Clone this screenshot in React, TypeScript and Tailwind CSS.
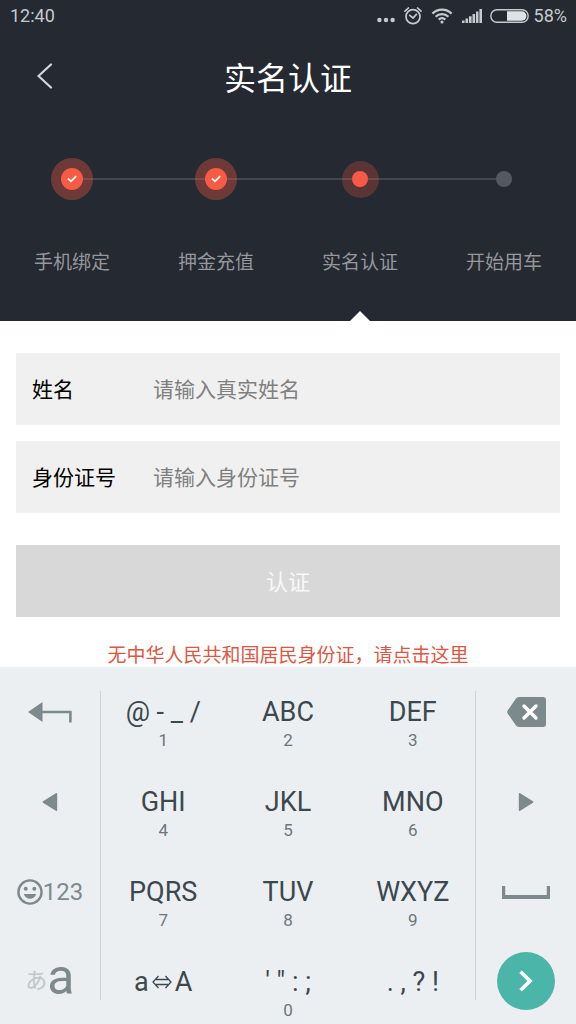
import type { ReactNode } from "react";

type StepState = "done" | "current" | "todo";

const steps: { label: string; state: StepState }[] = [
  { label: "手机绑定", state: "done" },
  { label: "押金充值", state: "done" },
  { label: "实名认证", state: "current" },
  { label: "开始用车", state: "todo" },
];

const keys: { label: string; digit?: string }[] = [
  { label: "@ - _ /", digit: "1" },
  { label: "ABC", digit: "2" },
  { label: "DEF", digit: "3" },
  { label: "GHI", digit: "4" },
  { label: "JKL", digit: "5" },
  { label: "MNO", digit: "6" },
  { label: "PQRS", digit: "7" },
  { label: "TUV", digit: "8" },
  { label: "WXYZ", digit: "9" },
  { label: "shift" },
  { label: "' \" : ;", digit: "0" },
  { label: ". , ? !" },
];

function StatusBar() {
  return (
    <div className="flex h-8 items-center justify-between pr-[9px] pl-[10px] font-['Roboto',sans-serif] text-[18px] leading-8 text-[#c6c9ce]">
      <span>12:40</span>
      <div className="flex items-center">
        <svg width="18" height="6" viewBox="0 0 18 6" className="mt-2 mr-[9px]" fill="currentColor">
          <circle cx="2.4" cy="3" r="2.2" />
          <circle cx="9" cy="3" r="2.2" />
          <circle cx="15.6" cy="3" r="2.2" />
        </svg>
        <svg width="18" height="18" viewBox="0 0 18 18" className="mr-[9px]" fill="none" stroke="currentColor" strokeWidth="1.7" strokeLinecap="round">
          <circle cx="9" cy="9.6" r="7" />
          <path d="M5.8 8.4 9 11l3.4-3.6M1 4.2 4.4 1M17 4.2 13.6 1" />
        </svg>
        <svg width="22" height="16" viewBox="0 0 22 16" className="mr-[9px]" fill="none" stroke="currentColor" strokeWidth="2.300">
          <path d="M1.4 5.6a13.6 13.6 0 0 1 19.2 0M4.6 8.8a9 9 0 0 1 12.8 0M7.7 11.6a4.7 4.7 0 0 1 6.6 0" />
          <circle cx="11" cy="14" r="1.6" fill="currentColor" stroke="none" />
        </svg>
        <svg width="20" height="14" viewBox="0 0 20 14" className="mr-2" fill="currentColor">
          <path d="M0 11.5h2.6V14H0zM3.5 9.500h2.600V14H3.500zM7 7.300h2.600V14H7zM10.500 5h2.600v9h-2.600zM14 2.500h2.500V14H14zM17.400 0H20v14h-2.600z" />
        </svg>
        <svg width="39" height="14" viewBox="0 0 39 14" className="mr-[5px]">
          <rect x="0.8" y="0.8" width="37.4" height="12.4" rx="6.2" fill="none" stroke="currentColor" strokeWidth="1.4" />
          <path d="M17 2.300h14.800a4.700 4.700 0 0 1 0 9.400H17z" fill="#dfe3e5" />
        </svg>
        <span>58%</span>
      </div>
    </div>
  );
}

function StepMark({ state }: { state: StepState }) {
  if (state === "todo") {
    return <span className="size-4 rounded-full bg-[#555861]" />;
  }
  if (state === "current") {
    return (
      <span className="flex size-[37px] items-center justify-center rounded-full bg-[#f75b45]/25">
        <span className="size-4 rounded-full bg-[#f75b45]" />
      </span>
    );
  }
  return (
    <span className="flex size-[42px] items-center justify-center rounded-full bg-[#f75b45]/35">
      <span className="flex size-[22px] items-center justify-center rounded-full bg-[#f75b45]">
        <svg width="10" height="8" viewBox="0 0 10 8" fill="none" stroke="#fff" strokeWidth="1.8">
          <path d="M1 3.500 4 6.300 9.200 1.200" />
        </svg>
      </span>
    </span>
  );
}

function Field({ id, label, placeholder }: { id: string; label: string; placeholder: string }) {
  return (
    <div className="flex h-[72px] items-center bg-[#f0f0f0] px-4 text-[21px]">
      <label htmlFor={id} className="w-[121px] shrink-0 text-black">
        {label}
      </label>
      <input
        id={id}
        type="text"
        placeholder={placeholder}
        className="h-full min-w-0 flex-1 bg-transparent pb-0.5 text-[#333] outline-none placeholder:text-[#808080]"
      />
    </div>
  );
}

function SideKey({ name, children }: { name: string; children: ReactNode }) {
  return (
    <button type="button" aria-label={name} className="flex items-center justify-center text-[#7d8a8d]">
      {children}
    </button>
  );
}

function Keyboard() {
  return (
    <section className="flex flex-1 bg-[#ebeff2] font-['Roboto','Noto_Sans_CJK_JP',sans-serif]">
      <div className="grid min-w-0 flex-[100] grid-rows-[90px_90px_90px_87px]">
        <SideKey name="Undo">
          <svg width="44" height="22" viewBox="0 0 44 22">
            <path d="M0 11 14.500 1v20z" fill="currentColor" />
            <path d="M14 11h28.400v10.500" fill="none" stroke="currentColor" strokeWidth="2.600" />
          </svg>
        </SideKey>
        <SideKey name="Left">
          <svg width="16" height="20" viewBox="0 0 16 20" fill="currentColor">
            <path d="M1 9.200 13.800 1.200q1.400-.8 1.400.8v16q0 1.600-1.400.8L1 10.800Q0 10 1 9.200z" />
          </svg>
        </SideKey>
        <SideKey name="Emoji and digits">
          <svg width="26" height="26" viewBox="0 0 26 26" fill="currentColor">
            <circle cx="13" cy="13" r="11.600" fill="none" stroke="currentColor" strokeWidth="2.400" />
            <circle cx="8.700" cy="9.700" r="2" />
            <circle cx="17.300" cy="9.700" r="2" />
            <path d="M6.800 15h12.400c-.9 3-3.300 4.800-6.200 4.800S7.700 18 6.800 15z" />
          </svg>
          <span className="text-2xl">123</span>
        </SideKey>
        <SideKey name="Input mode">
          <span className="text-[22px] leading-8 text-[#c0c6c9]">あ</span>
          <span className="pb-2 text-[50px] leading-[50px]">a</span>
        </SideKey>
      </div>
      <div className="mt-6 mb-6 w-px bg-[#cdd2d5]" />
      <div className="grid min-w-0 flex-[375] grid-cols-3 grid-rows-[90px_90px_90px_87px]">
        {keys.map((key) => (
          <button key={key.label} type="button" aria-label={key.label} className="flex flex-col items-center pt-[29px]">
            <span className="flex h-8 items-center text-[27px] leading-8 whitespace-pre text-[#3b484d]">
              {key.label === "shift" ? (
                <>
                  a
                  <svg width="20" height="14" viewBox="0 0 20 14" className="mx-[3px]" fill="none" stroke="currentColor" strokeWidth="1.300">
                    <path d="M4 4.500h12M4 9.500h12M6.500 1 1 7l5.500 6M13.500 1 19 7l-5.500 6" />
                  </svg>
                  A
                </>
              ) : (
                key.label
              )}
            </span>
            {key.digit && <span className="text-[17px] leading-6 text-[#6d767a]">{key.digit}</span>}
          </button>
        ))}
      </div>
      <div className="mt-6 mb-6 w-px bg-[#cdd2d5]" />
      <div className="grid min-w-0 flex-[100] grid-rows-[90px_90px_90px_87px]">
        <SideKey name="Backspace">
          <svg width="39" height="30" viewBox="0 0 39 30">
            <path d="M12 0h24q3 0 3 3v24q0 3-3 3H12q-2 0-3.200-1.800L.6 16.400q-.9-1.400 0-2.800L8.800 1.800Q10 0 12 0z" fill="currentColor" />
            <path d="m17 9 12 12M29 9 17 21" stroke="#fff" strokeWidth="3.400" strokeLinecap="round" />
          </svg>
        </SideKey>
        <SideKey name="Right">
          <svg width="16" height="20" viewBox="0 0 16 20" fill="currentColor">
            <path d="M15 9.200 2.200 1.200Q.8.400.8 2v16q0 1.600 1.400.8L15 10.800q1-.8 0-1.600z" />
          </svg>
        </SideKey>
        <SideKey name="Space">
          <svg width="48" height="13" viewBox="0 0 48 13" fill="currentColor">
            <path d="M0 0h3.200v9h41.600V0H48v13H0z" />
          </svg>
        </SideKey>
        <SideKey name="Next">
          <span className="flex size-[58px] items-center justify-center rounded-full bg-[#4cb5a9]">
            <svg width="16" height="22" viewBox="0 0 16 22" fill="none" stroke="#fff" strokeWidth="3.600">
              <path d="m2.500 1.800 9.500 9.200-9.500 9.200" />
            </svg>
          </span>
        </SideKey>
      </div>
    </section>
  );
}

export default function App() {
  return (
    <div className="flex min-h-screen flex-col bg-white font-['Noto_Sans_CJK_SC',sans-serif]">
      <header className="bg-[#252931]">
        <StatusBar />
        <div className="grid h-[88px] grid-cols-[90px_1fr_90px] items-center">
          <button type="button" aria-label="返回" className="flex h-full items-center justify-center text-[#d5d8dc]">
            <svg width="16" height="26" viewBox="0 0 16 26" fill="none" stroke="currentColor" strokeWidth="2.200" strokeLinecap="round">
              <path d="M14 1.500 1.500 13 14 24.500" />
            </svg>
          </button>
          <h1 className="text-center text-[32px] text-white">实名认证</h1>
        </div>
        <ol className="relative flex h-[201px] pt-[38px]">
          <li aria-hidden="true" className="absolute inset-x-[12.5%] top-[58px] h-[2px] bg-[#42464d]" />
          {steps.map((step) => (
            <li key={step.label} className="relative flex flex-1 flex-col items-center">
              <span className="flex h-[42px] items-center">
                <StepMark state={step.state} />
              </span>
              <span className="mt-[47px] text-[19px] leading-7 text-[#95979b]">{step.label}</span>
              {step.state === "current" && (
                <svg width="20" height="10" viewBox="0 0 20 10" className="absolute bottom-0" fill="#fff">
                  <path d="M10 0 20 10H0z" />
                </svg>
              )}
            </li>
          ))}
        </ol>
      </header>

      <form className="flex flex-col px-4 pt-8">
        <div className="flex flex-col gap-4">
          <Field id="real-name" label="姓名" placeholder="请输入真实姓名" />
          <Field id="id-number" label="身份证号" placeholder="请输入身份证号" />
        </div>
        <button type="button" className="mt-8 h-[72px] bg-[#d8d8d8] pb-0.5 text-[22px] text-[#f8f8f8]">
          认证
        </button>
        <a href="#other-id" className="mt-6 text-center text-[19px] leading-[26px] text-[#dc5742]">
          无中华人民共和国居民身份证，请点击这里
        </a>
      </form>

      <Keyboard />
    </div>
  );
}
